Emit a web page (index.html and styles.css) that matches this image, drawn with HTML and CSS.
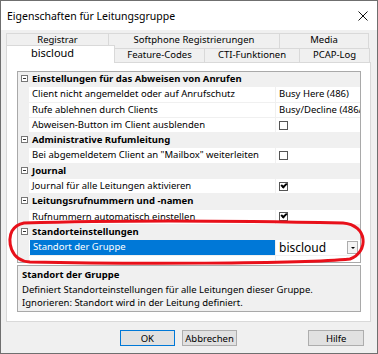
FILE: index.html
```html
<!DOCTYPE html>
<html lang="de">
<head>
    <meta charset="UTF-8">
    <title>Eigenschaften für Leitungsgruppe</title>
    <link rel="stylesheet" href="styles.css">
</head>
<body>
    <div class="window">
        <div class="titlebar">
            <span class="title">Eigenschaften für Leitungsgruppe</span>
            <svg class="close" width="10" height="10" viewBox="0 0 10 10">
                <path d="M0.5 0.5 L9.5 9.5 M9.5 0.5 L0.5 9.5" stroke="#111" stroke-width="1" fill="none"/>
            </svg>
        </div>

        <div class="client">
            <div class="tabs">
                <div class="tab-row row-back">
                    <div class="tab">Registrar</div>
                    <div class="tab">Softphone Registrierungen</div>
                    <div class="tab">Media</div>
                </div>
                <div class="tab-row row-front">
                    <div class="tab active">biscloud</div>
                    <div class="tab">Feature-Codes</div>
                    <div class="tab">CTI-Funktionen</div>
                    <div class="tab">PCAP-Log</div>
                </div>
            </div>

            <div class="panel">
                <div class="propgrid">
                    <div class="row cat"><span class="toggle"></span><span class="name">Einstellungen für das Abweisen von Anrufen</span></div>
                    <div class="row"><span class="gutter"></span><span class="name">Client nicht angemeldet oder auf Anrufschutz</span><span class="value">Busy Here (486)</span></div>
                    <div class="row"><span class="gutter"></span><span class="name">Rufe ablehnen durch Clients</span><span class="value">Busy/Decline (486/603)</span></div>
                    <div class="row"><span class="gutter"></span><span class="name">Abweisen-Button im Client ausblenden</span><span class="value"><span class="check"></span></span></div>
                    <div class="row cat"><span class="toggle"></span><span class="name">Administrative Rufumleitung</span></div>
                    <div class="row"><span class="gutter"></span><span class="name">Bei abgemeldetem Client an "Mailbox" weiterleiten</span><span class="value"><span class="check"></span></span></div>
                    <div class="row cat"><span class="toggle"></span><span class="name">Journal</span></div>
                    <div class="row"><span class="gutter"></span><span class="name">Journal für alle Leitungen aktivieren</span><span class="value"><span class="check on"></span></span></div>
                    <div class="row cat"><span class="toggle"></span><span class="name">Leitungsrufnummern und -namen</span></div>
                    <div class="row"><span class="gutter"></span><span class="name">Rufnummern automatisch einstellen</span><span class="value"><span class="check on"></span></span></div>
                    <div class="row cat"><span class="toggle"></span><span class="name">Standorteinstellungen</span></div>
                    <div class="row selected">
                        <span class="gutter"></span>
                        <span class="name">Standort der Gruppe</span>
                        <span class="value combo">
                            <span class="combo-text">biscloud</span>
                            <span class="combo-btn"></span>
                        </span>
                    </div>
                    <div class="row filler"><span class="gutter"></span><span class="name"></span><span class="value"></span></div>
                </div>

                <div class="desc">
                    <div class="desc-title">Standort der Gruppe</div>
                    <div>Definiert Standorteinstellungen für alle Leitungen dieser Gruppe.</div>
                    <div>Ignorieren: Standort wird in der Leitung definiert.</div>
                </div>
            </div>

            <div class="buttons">
                <button class="btn default">OK</button>
                <button class="btn">Abbrechen</button>
                <button class="btn help">Hilfe</button>
            </div>
        </div>

        <!-- hand drawn marker around the location setting -->
        <svg class="marker" width="378" height="354" viewBox="0 0 378 354">
            <path d="M24 223 C 120 220, 250 221, 343 223 C 368 225, 369 252, 350 259 C 300 264, 120 264, 30 262 C 10 261, 7 240, 12 231 C 15 226, 19 224, 24 223 Z"
                  stroke="#e8101a" stroke-width="3" fill="none"/>
        </svg>
    </div>
</body>
</html>
```

FILE: styles.css
```css
body {
    margin: 0;
    font-family: "Noto Sans", "Open Sans", sans-serif;
    font-size: 9.5px;
    color: #000;
}

.window {
    position: relative;
    width: 378px;
    height: 354px;
    box-sizing: border-box;
    border: 1px solid #6f6f6f;
    background: #f0f0f0;
    display: flex;
    flex-direction: column;
    overflow: hidden;
}

/* Title bar */
.titlebar {
    height: 29px;
    background: #fff;
    display: flex;
    align-items: center;
    justify-content: space-between;
    padding: 0 9px 0 6px;
}
.title {
    font-size: 10.5px;
}

.client {
    flex: 1;
    display: flex;
    flex-direction: column;
    padding: 3px 6px 0 5px;
}

/* Tabs */
.tab-row {
    display: grid;
    height: 15px;
}
.row-back {
    margin-left: 1px;
    width: 362px;
    grid-template-columns: 102px 171px 89px;
}
.row-back .tab {
    align-items: flex-start;
    line-height: 11px;
}
.row-front {
    width: 364px;
    height: 14px;
    grid-template-columns: 109px 90px 95px 70px;
    align-items: end;
}
.tab {
    height: 100%;
    box-sizing: border-box;
    border: 1px solid #d9d9d9;
    border-bottom: none;
    margin-left: -1px;
    background: #f0f0f0;
    display: flex;
    align-items: center;
    justify-content: center;
    white-space: nowrap;
}
.row-front .tab {
    height: 14px;
    align-items: flex-start;
    line-height: 11px;
}
.row-front .tab.active {
    position: relative;
    z-index: 2;
    height: 18px;
    margin-top: -3px;
    margin-bottom: -1px;
    margin-left: 0;
    background: #fff;
    font-size: 11px;
    line-height: 13px;
    padding: 0 16px 0 0;
}

/* Tab page */
.panel {
    width: 365px;
    height: 260px;
    box-sizing: border-box;
    background: #fff;
    border: 1px solid #d9d9d9;
    padding: 8px 9px 0 10px;
    display: flex;
    flex-direction: column;
    gap: 2px;
}

/* Property grid */
.propgrid {
    height: 192px;
    box-sizing: border-box;
    border: 1px solid #a9a9a9;
    display: flex;
    flex-direction: column;
    overflow: hidden;
}
.row {
    display: grid;
    grid-template-columns: 11px 246px 1fr;
    height: 15.3px;
    flex: none;
    box-sizing: border-box;
    border-bottom: 1px solid #f0f0f0;
    line-height: 14px;
    white-space: nowrap;
}
.row .gutter {
    background: #f0f0f0;
}
.row .name {
    padding-left: 3px;
    overflow: hidden;
}
.row .value {
    border-left: 1px solid #f0f0f0;
    padding-left: 3px;
    overflow: hidden;
    display: flex;
    align-items: center;
}
.row.cat {
    background: #f0f0f0;
    grid-template-columns: 11px 1fr;
    font-weight: bold;
}
.toggle {
    width: 7px;
    height: 7px;
    margin: 3px 0 0 3px;
    box-sizing: border-box;
    border: 1px solid #777;
    background: #fff;
    position: relative;
}
.toggle::after {
    content: "";
    position: absolute;
    left: 1px;
    top: 2px;
    width: 3px;
    height: 1px;
    background: #333;
}

.check {
    width: 9px;
    height: 9px;
    box-sizing: border-box;
    border: 1px solid #555;
    background: #fff;
    position: relative;
}
.check.on::after {
    content: "";
    position: absolute;
    left: 1px;
    top: 0;
    width: 4px;
    height: 2px;
    border-left: 2px solid #000;
    border-bottom: 2px solid #000;
    transform: rotate(-45deg);
}

.row.selected .name {
    background: #0078d7;
    color: #fff;
    margin-left: 1px;
}
.combo {
    justify-content: space-between;
    padding-right: 2px;
    overflow: visible;
}
.combo-text {
    font-size: 12px;
    line-height: 13px;
}
.combo-btn {
    width: 11px;
    height: 13px;
    box-sizing: border-box;
    border: 1px solid #adadad;
    background: #f4f4f4;
    position: relative;
}
.combo-btn::after {
    content: "";
    position: absolute;
    left: 3px;
    top: 5px;
    border-left: 2px solid transparent;
    border-right: 2px solid transparent;
    border-top: 2px solid #000;
}
.row.filler {
    flex: 1;
    border-bottom: none;
}

/* Description pane */
.desc {
    height: 47px;
    box-sizing: border-box;
    background: #f0f0f0;
    border: 1px solid #a9a9a9;
    padding: 2px 4px 0 4px;
    line-height: 13.5px;
    overflow: hidden;
}
.desc-title {
    font-weight: bold;
    margin-bottom: 1px;
}

/* Dialog buttons */
.buttons {
    display: flex;
    padding: 8px 0 0 114px;
}
.btn {
    height: 16px;
    box-sizing: border-box;
    background: #e1e1e1;
    border: 1px solid #adadad;
    font-family: inherit;
    font-size: 9.5px;
    padding: 0;
    margin-right: 7px;
    width: 58px;
}
.btn.default {
    border-color: #0078d7;
    width: 57px;
}
.btn.help {
    margin-left: 64px;
    width: 58px;
}

.marker {
    position: absolute;
    left: -1px;
    top: -1px;
    pointer-events: none;
}
```
